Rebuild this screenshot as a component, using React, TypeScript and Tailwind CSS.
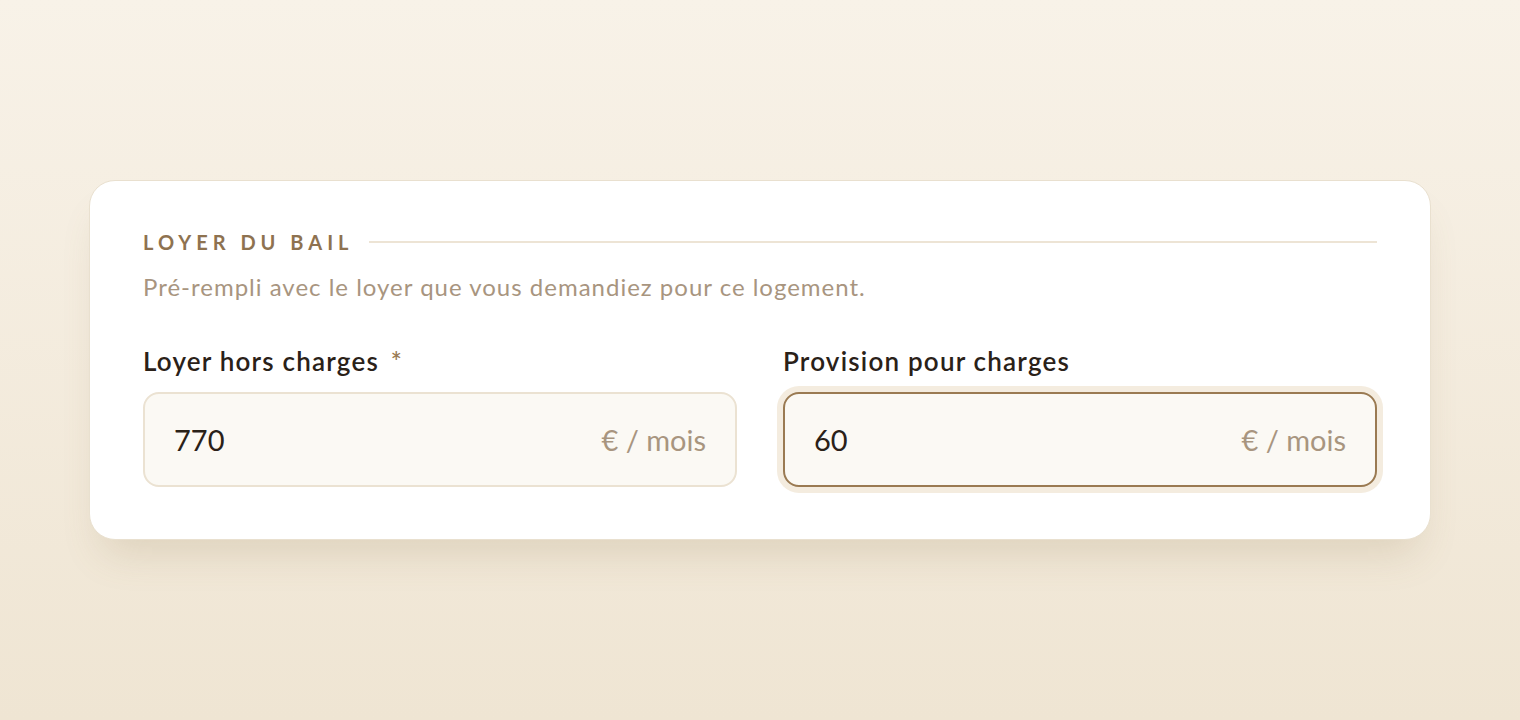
export default function App() {
  return (
    <div
      className="min-h-screen w-full flex items-center justify-center bg-gradient-to-b from-[#f8f2e8] to-[#efe5d3]"
      style={{ fontFamily: 'Lato, "Noto Sans", sans-serif' }}
    >
      <div className="w-[1342px] rounded-[26px] border border-[#e9e0cf] bg-white px-[53px] pt-[49px] pb-[52px] shadow-[0_26px_40px_-14px_rgba(140,115,70,0.2)]">
        {/* section title */}
        <div className="flex items-center gap-4">
          <h2 className="text-[20px] leading-6 font-bold tracking-[5px] text-[#8e7250] uppercase">Loyer du bail</h2>
          <div className="h-[2px] flex-1 bg-[#ede4d5]" />
        </div>
        <p className="mt-[17px] text-[24px] leading-8 tracking-[1px] text-[#a8957f]">
          Pré-rempli avec le loyer que vous demandiez pour ce logement.
        </p>

        <div className="mt-[41px] grid grid-cols-2 gap-[46px]">
          <div>
            <label className="block text-[26px] leading-[34px] font-semibold tracking-[1.2px] text-[#2a2118]">
              Loyer hors charges <span className="ml-1 text-[#9a7b54]">*</span>
            </label>
            <div className="mt-[14px] flex h-[95px] items-center justify-between rounded-[16px] border-2 border-[#ebe2d2] bg-[#fbf9f4] px-[29px]">
              <span className="text-[29px] text-[#2a2118]">770</span>
              <span className="text-[29px] text-[#a8957f]">€ / mois</span>
            </div>
          </div>
          <div>
            <label className="block text-[26px] leading-[34px] font-semibold tracking-[1.2px] text-[#2a2118]">
              Provision pour charges
            </label>
            <div className="mt-[14px] flex h-[95px] items-center justify-between rounded-[16px] border-2 border-[#9a7a52] bg-[#fbf9f4] px-[29px] ring-[6px] ring-[#f4ecdf]">
              <span className="text-[29px] text-[#2a2118]">60</span>
              <span className="text-[29px] text-[#a8957f]">€ / mois</span>
            </div>
          </div>
        </div>
      </div>
    </div>
  )
}
